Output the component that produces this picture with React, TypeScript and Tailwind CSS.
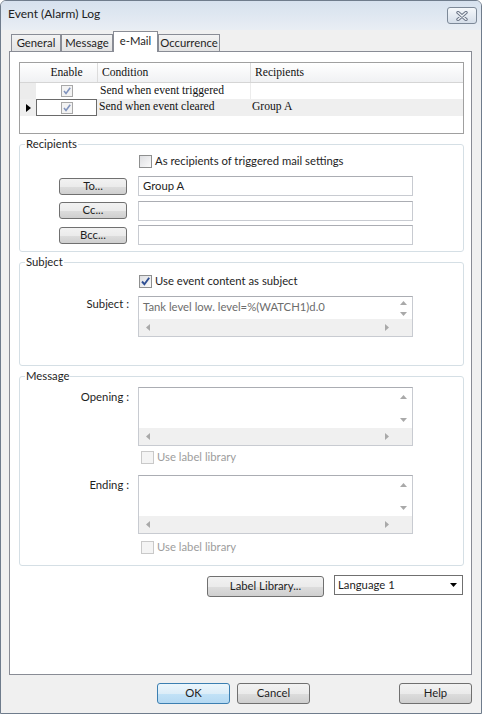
import React from "react";

type Kids = { children?: React.ReactNode };

function Arrow({ dir, color = "#a9a9a9" }: { dir: "up" | "down" | "left" | "right"; color?: string }) {
  const pts = {
    up: "0,4 3.5,0 7,4",
    down: "0,0 7,0 3.5,4",
    left: "4,0 4,7 0,3.5",
    right: "0,0 0,7 4,3.5",
  }[dir];
  const vertical = dir === "up" || dir === "down";
  return (
    <svg width={vertical ? 7 : 4} height={vertical ? 4 : 7} viewBox={vertical ? "0 0 7 4" : "0 0 4 7"}>
      <polygon points={pts} fill={color} />
    </svg>
  );
}

function Check({ checked = false, disabled = false }: { checked?: boolean; disabled?: boolean }) {
  return (
    <span
      className={`inline-flex w-[13px] h-[13px] shrink-0 items-center justify-center border ${
        disabled ? "border-[#c9c9c9] bg-[#f4f4f4]" : "border-[#8e8f8f] bg-linear-to-br from-[#dedfe2] to-[#fafafa]"
      }`}
    >
      {checked && (
        <svg width="11" height="11" viewBox="0 0 11 11">
          <path d="M2 5.5 L4.4 8.2 L9.2 1.8" fill="none" stroke="#2f4f93" strokeWidth="1.9" />
        </svg>
      )}
    </span>
  );
}

function GridCheck() {
  return (
    <span className="inline-flex w-[12px] h-[12px] items-center justify-center border border-[#a8a8a8] bg-[#f3f3f3]">
      <svg width="10" height="10" viewBox="0 0 10 10">
        <path d="M2 5 L4 7.4 L8.2 1.8" fill="none" stroke="#8193bd" strokeWidth="1.6" />
      </svg>
    </span>
  );
}

function Btn({ label, className = "", primary = false }: { label: string; className?: string; primary?: boolean }) {
  return (
    <div
      className={`flex items-center justify-center rounded-[3px] border text-[11.3px] text-[#1e1e1e] ${
        primary
          ? "border-[#3c7fb1] bg-[linear-gradient(#ecf6fc_0%,#dcedf8_50%,#c2e2f7_51%,#b5d9f2_100%)]"
          : "border-[#707070] bg-[linear-gradient(#f2f2f2_0%,#ebebeb_50%,#dddddd_51%,#cfcfcf_100%)]"
      } ${className}`}
    >
      {label}
    </div>
  );
}

function TextBox({ value = "" }: { value?: string }) {
  return (
    <div className="w-[275px] h-[20px] border border-[#c8cbd1] border-t-[#abadb3] bg-white pl-[4px] text-[11.3px] leading-[18px] text-[#1e1e1e]">
      {value}
    </div>
  );
}

function MultiBox({ h, text = "" }: { h: string; text?: string }) {
  return (
    <div className={`w-[275px] ${h} flex flex-col border border-[#c8cbd1] border-t-[#abadb3] bg-white`}>
      <div className="flex min-h-0 flex-1">
        <div className="flex-1 pl-[4px] pt-[2px] text-[11.3px] leading-[16px] text-[#6d6d6d]">{text}</div>
        <div className="flex w-[17px] flex-col justify-between">
          <div className="flex h-[17px] min-h-0 shrink items-center justify-center">
            <Arrow dir="up" />
          </div>
          <div className="flex h-[17px] min-h-0 shrink items-center justify-center">
            <Arrow dir="down" />
          </div>
        </div>
      </div>
      <div className="flex h-[17px] shrink-0 bg-[#f0f0f0]">
        <div className="flex flex-1 items-center justify-between">
          <div className="flex w-[17px] justify-center">
            <Arrow dir="left" />
          </div>
          <div className="flex w-[17px] justify-center">
            <Arrow dir="right" />
          </div>
        </div>
        <div className="w-[17px]" />
      </div>
    </div>
  );
}

function Group({ title, className = "", children }: { title: string; className?: string } & Kids) {
  return (
    <fieldset className={`w-[445px] rounded-[3px] border border-[#d5dfe5] ${className}`}>
      <legend className="ml-[5px] px-[1px] text-[11.3px] leading-[16px] text-[#1e1e1e]">{title}</legend>
      {children}
    </fieldset>
  );
}

function Tab({ label, w, active = false }: { label: string; w: string; active?: boolean }) {
  return active ? (
    <div className={`${w} relative z-10 flex h-[21px] items-start justify-center border border-b-0 border-[#898c95] bg-white pt-[1px] text-[11.3px]`}>
      {label}
    </div>
  ) : (
    <div
      className={`${w} flex h-[18px] items-center justify-center border border-[#898c95] bg-linear-to-b from-[#f3f3f3] to-[#e3e3e3] text-[11.3px]`}
    >
      {label}
    </div>
  );
}

export default function App() {
  return (
    <div className="h-[715px] w-[482px] bg-white font-['Lato','Segoe_UI',sans-serif] text-[#1e1e1e]">
      <div className="flex h-[714px] w-[482px] flex-col overflow-hidden rounded-t-[6px] border border-[#6f7c8c] bg-[#f0f0f0]">
        {/* title bar */}
        <div className="flex h-[29px] shrink-0 items-start justify-between bg-linear-to-b from-[#d6e1ee] to-[#e9eef4] pl-[7px] pr-[4px]">
          <span className="pt-[5px] text-[12px] leading-[16px] text-[#222]">Event (Alarm) Log</span>
          <div className="mt-[6px] flex h-[17px] w-[30px] items-center justify-center rounded-[3px] border border-[#7d8998] bg-linear-to-b from-[#f5f8fb] to-[#d5dee9]">
            <svg width="12" height="10" viewBox="0 0 12 10">
              <path d="M2 1.5 L10 8.5 M10 1.5 L2 8.5" stroke="#6b7587" strokeWidth="3.4" strokeLinecap="round" />
              <path d="M2 1.5 L10 8.5 M10 1.5 L2 8.5" stroke="#eef2f6" strokeWidth="1.4" strokeLinecap="round" />
            </svg>
          </div>
        </div>

        {/* tabs */}
        <div className="flex h-[22px] shrink-0 items-end pl-[10px]">
          <Tab label="General" w="w-[50px]" />
          <Tab label="Message" w="w-[52px]" />
          <Tab label="e-Mail" w="w-[45px]" active />
          <Tab label="Occurrence" w="w-[62px]" />
        </div>

        {/* tab page */}
        <div className="mx-[8px] -mt-px flex h-[624px] w-[463px] shrink-0 flex-col border border-[#898c95] bg-white pl-[9px] pt-[10px]">
          {/* grid */}
          <div className="h-[72px] w-[445px] border border-[#a0a0a0] font-['Liberation_Serif',serif] text-[11.6px] text-[#111]">
            <div className="flex h-[20px] border-b border-[#d5d5d5] bg-linear-to-b from-white to-[#f0f1f3] leading-[19px]">
              <div className="w-[16px]" />
              <div className="w-[62px] border-r border-[#dcdcdc] text-center">Enable</div>
              <div className="w-[153px] border-r border-[#dcdcdc] pl-[4px]">Condition</div>
              <div className="flex-1 pl-[4px]">Recipients</div>
            </div>
            <div className="flex h-[16px] leading-[16px]">
              <div className="w-[16px] bg-[#ececec]" />
              <div className="flex w-[62px] items-center justify-center">
                <GridCheck />
              </div>
              <div className="w-[153px] border-r border-[#ececec] pl-[2px]">Send when event triggered</div>
              <div className="flex-1" />
            </div>
            <div className="flex h-[17px] bg-[#efefef] leading-[16px]">
              <div className="flex w-[16px] items-center justify-center">
                <svg width="5" height="8" viewBox="0 0 5 8">
                  <polygon points="0,0 5,4 0,8" fill="#000" />
                </svg>
              </div>
              <div className="flex w-[61px] items-center justify-center border border-[#6a6a6a] bg-white">
                <GridCheck />
              </div>
              <div className="w-[154px] pl-[2px]">Send when event cleared</div>
              <div className="flex-1 pl-[1px]">Group A</div>
            </div>
          </div>

          {/* Recipients */}
          <Group title="Recipients" className="mt-[2px] pb-[6px]">
            <div className="mt-[1px] flex h-[16px] items-center gap-[3px] pl-[119px] text-[11.3px]">
              <Check />
              <span>As recipients of triggered mail settings</span>
            </div>
            <div className="mt-[7px] flex flex-col gap-[4.5px]">
              {[
                ["To...", "Group A"],
                ["Cc...", ""],
                ["Bcc...", ""],
              ].map(([b, v]) => (
                <div key={b} className="flex h-[20px] items-center pl-[39px]">
                  <Btn label={b} className="h-[17px] w-[68px]" />
                  <div className="ml-[11px]">
                    <TextBox value={v} />
                  </div>
                </div>
              ))}
            </div>
          </Group>

          {/* Subject */}
          <Group title="Subject" className="mt-[2px] pb-[28px]">
            <div className="mt-[3px] flex h-[16px] items-center gap-[3px] pl-[119px] text-[11.3px]">
              <Check checked />
              <span>Use event content as subject</span>
            </div>
            <div className="mt-[7px] flex items-start">
              <div className="w-[109px] text-right text-[11.3px] leading-[16px]">Subject :</div>
              <div className="ml-[9px]">
                <MultiBox h="h-[41px]" text="Tank level low. level=%(WATCH1)d.0" />
              </div>
            </div>
          </Group>

          {/* Message */}
          <Group title="Message" className="mt-[2px] pb-[10px]">
            <div className="mt-[3px] flex items-start">
              <div className="w-[109px] pt-[2px] text-right text-[11.3px] leading-[16px]">Opening :</div>
              <div className="ml-[9px]">
                <MultiBox h="h-[59px]" />
              </div>
            </div>
            <div className="mt-[3px] flex h-[16px] items-center gap-[3px] pl-[121px] text-[11.3px] text-[#9d9d9d]">
              <Check disabled />
              <span>Use label library</span>
            </div>
            <div className="mt-[10px] flex items-start">
              <div className="w-[109px] pt-[2px] text-right text-[11.3px] leading-[16px]">Ending :</div>
              <div className="ml-[9px]">
                <MultiBox h="h-[59px]" />
              </div>
            </div>
            <div className="mt-[5px] flex h-[16px] items-center gap-[3px] pl-[121px] text-[11.3px] text-[#9d9d9d]">
              <Check disabled />
              <span>Use label library</span>
            </div>
          </Group>

          {/* label library + language */}
          <div className="mt-[9px] flex w-[445px] items-start justify-end gap-[10px] pr-[1px]">
            <Btn label="Label Library..." className="mt-[1px] h-[21px] w-[117px]" />
            <div className="flex h-[20px] w-[129px] items-center justify-between border border-[#707070] bg-white pl-[3px] pr-[5px] text-[11.3px]">
              <span>Language 1</span>
              <svg width="7" height="4" viewBox="0 0 7 4">
                <polygon points="0,0 7,0 3.5,4" fill="#000" />
              </svg>
            </div>
          </div>
        </div>

        {/* footer */}
        <div className="mt-[8px] flex pl-[156px]">
          <Btn label="OK" primary className="h-[21px] w-[73px]" />
          <Btn label="Cancel" className="ml-[7px] h-[21px] w-[73px]" />
          <Btn label="Help" className="ml-[89px] h-[21px] w-[73px]" />
        </div>
      </div>
    </div>
  );
}
